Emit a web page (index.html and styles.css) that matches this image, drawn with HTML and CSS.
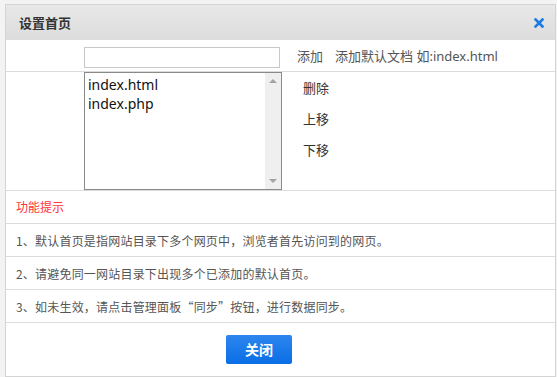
FILE: index.html
```html
<!DOCTYPE html>
<html lang="zh-cn">

<head>
    <meta charset="UTF-8">
    <title>设置首页</title>
    <link rel="stylesheet" href="styles.css">
</head>

<body>
    <div class="dialog">
        <div class="dlgHead">
            <span class="dlgTitle">设置首页</span>
            <svg class="dlgClose" width="10" height="10" viewBox="0 0 10 10">
                <path d="M1.5 1.5 L8.5 8.5 M8.5 1.5 L1.5 8.5" stroke="#1a7ae6" stroke-width="2.6" stroke-linecap="square" />
            </svg>
        </div>
        <div class="row rowAdd">
            <div class="label"></div>
            <input class="txt" type="text">
            <span class="addBtn">添加</span>
            <span class="addTip">添加默认文档 如:index.html</span>
        </div>
        <div class="row rowList">
            <div class="label"></div>
            <div class="list">
                <div class="items">
                    <p>index.html</p>
                    <p>index.php</p>
                </div>
                <div class="scroll">
                    <span class="up"></span>
                    <span class="down"></span>
                </div>
            </div>
            <div class="ops">
                <span>删除</span>
                <span>上移</span>
                <span>下移</span>
            </div>
        </div>
        <div class="row tipTitle">功能提示</div>
        <div class="row tip">1、默认首页是指网站目录下多个网页中，浏览者首先访问到的网页。</div>
        <div class="row tip">2、请避免同一网站目录下出现多个已添加的默认首页。</div>
        <div class="row tip">3、如未生效，请点击管理面板“同步”按钮，进行数据同步。</div>
        <div class="dlgFoot">
            <span class="btnClose">关闭</span>
        </div>
    </div>
</body>

</html>
```

FILE: styles.css
```css
html,
body {
    margin: 0;
    height: 100%;
    background-color: #f3f3f3;
}

body {
    font-family: "Microsoft YaHei", "Noto Sans", "Noto Sans CJK SC", sans-serif;
    font-size: 12px;
    color: #444;
    border-left: 1px solid #f3f3f3;
}

.dialog {
    margin: 4px 0 0 4px;
    width: 549px;
    height: 371px;
    border: 1px solid #d4d4d4;
    background-color: #fff;
    display: flex;
    flex-direction: column;
}

.dlgHead {
    height: 35px;
    display: flex;
    align-items: center;
    justify-content: space-between;
    padding: 0 11px 0 13px;
    background: linear-gradient(#e8e8e8, #dcdcdc);
}

.dlgTitle {
    font-size: 13px;
    font-weight: bold;
    color: #333;
}

.dlgClose {
    display: block;
}

.row {
    border-bottom: 1px solid #dcdcdc;
    display: flex;
}

.label {
    width: 78px;
    flex: none;
}

.rowAdd {
    height: 32px;
    align-items: flex-start;
    padding-top: 1px;
    box-sizing: border-box;
}

.txt {
    margin: 6px 0 0;
    width: 196px;
    height: 21px;
    box-sizing: border-box;
    border: 1px solid #c8c8c8;
    padding: 0 4px;
}

.addBtn,
.addTip {
    font-size: 13px;
    color: #555;
    line-height: 31px;
}

.addBtn {
    margin-left: 17px;
}

.addTip {
    margin-left: 12px;
}

.rowList {
    height: 119px;
    box-sizing: border-box;
}

.list {
    width: 198px;
    height: 118px;
    box-sizing: border-box;
    border: 1px solid #8a8a8a;
    display: flex;
}

.items {
    flex: 1;
    padding: 2px 3px;
}

.items p {
    margin: 0;
    font-size: 14px;
    line-height: 19px;
    color: #111;
}

.scroll {
    width: 16px;
    background-color: #efefef;
    display: flex;
    flex-direction: column;
    justify-content: space-between;
    align-items: center;
    padding: 6px 0;
}

.up,
.down {
    width: 0;
    height: 0;
    border-left: 4px solid transparent;
    border-right: 4px solid transparent;
}

.up {
    border-bottom: 4px solid #a3a3a3;
}

.down {
    border-top: 4px solid #a3a3a3;
}

.ops {
    display: flex;
    flex-direction: column;
    padding: 1px 0 0 21px;
}

.ops span {
    font-size: 13px;
    color: #333;
    line-height: 31px;
}

.tipTitle {
    height: 33px;
    box-sizing: border-box;
    align-items: center;
    padding-left: 10px;
    color: #f33;
    font-size: 12px;
}

.tip {
    height: 33px;
    box-sizing: border-box;
    align-items: center;
    padding-left: 10px;
    color: #555;
    letter-spacing: 0.2px;
    font-family: "Noto Sans CJK SC", sans-serif;
}

.tip:last-of-type {
    height: 32px;
}

.dlgFoot {
    flex: 1;
    padding: 12px 0 0 220px;
}

.btnClose {
    display: inline-block;
    width: 66px;
    height: 29px;
    line-height: 29px;
    text-align: center;
    border-radius: 2px;
    background: linear-gradient(#2d86ee, #0a6ee6);
    color: #fff;
    font-size: 14px;
    font-weight: bold;
}
```
